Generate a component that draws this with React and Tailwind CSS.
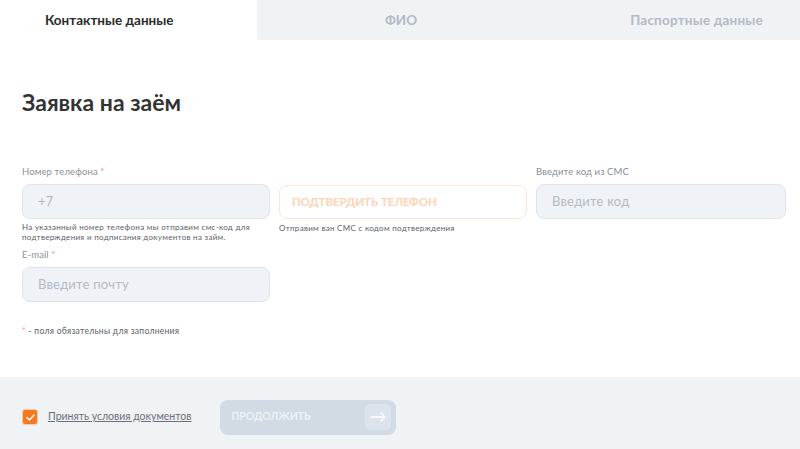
import React from 'react';

const font = { fontFamily: 'Lato, "Noto Sans", sans-serif' };

function Field({ label, required, placeholder, hint }) {
  return (
    <div className="flex flex-col">
      <div className="h-[24px] text-[9.5px] leading-[14px] text-[#8a8f96] pt-[5px] tracking-[0.1px]">
        {label}
        {required && <span className="text-[#f28b8b]"> *</span>}
      </div>
      <div className="h-[35px] rounded-[8px] border border-[#dde4ec] bg-[#eff3f7] flex items-center px-[15px] text-[13px] text-[#b3bac4] tracking-[0.2px]">
        {placeholder}
      </div>
      {hint && <p className="mt-[3px] text-[8px] leading-[10px] text-[#5b6068] tracking-[0.3px]">{hint}</p>}
    </div>
  );
}

export default function App() {
  return (
    <div className="w-[800px] h-[449px] bg-white flex flex-col overflow-hidden" style={font}>
      <div className="flex h-[40px] bg-[#eff3f6] text-[13.5px] font-bold">
        <div className="w-[257px] bg-white flex items-center pl-[45px] text-[#2b2b2b]">Контактные данные</div>
        <div className="w-[283px] flex items-center pl-[128px] text-[#b3bac4]">ФИО</div>
        <div className="flex-1 flex items-center justify-end pr-[37px] text-[#b3bac4] tracking-[0.2px]">Паспортные данные</div>
      </div>

      <div className="flex-1 px-[22px] pt-[47px]">
        <h1 className="text-[23px] leading-[30px] font-bold text-[#333]">Заявка на заём</h1>

        <div className="mt-[43px] grid grid-cols-[248px_248px_250px] gap-x-[9px]">
          <Field
            label="Номер телефона"
            required
            placeholder="+7"
            hint={<>На указанный номер телефона мы отправим смс-код для<br />подтверждения и подписания документов на займ.</>}
          />
          <div className="flex flex-col pt-[25px]">
            <div className="h-[34px] rounded-[8px] border border-[#fde6d5] flex items-center px-[12px] text-[11.5px] font-bold text-[#fdd3b3]">
              ПОДТВЕРДИТЬ ТЕЛЕФОН
            </div>
            <p className="mt-[4px] text-[8px] leading-[10px] text-[#5b6068] tracking-[0.3px]">Отправим ван СМС с кодом подтверждения</p>
          </div>
          <Field label="Введите код из СМС" placeholder="Введите код" />
        </div>

        <div className="mt-[1px] w-[248px]">
          <Field label="E-mail" required placeholder="Введите почту" />
        </div>

        <p className="mt-[23px] text-[8.5px] text-[#5b6068] tracking-[0.3px]">
          <span className="text-[#f28b8b]">*</span> - поля обязательны для заполнения
        </p>
      </div>

      <div className="h-[72px] bg-[#eff3f6] flex items-center px-[22px] pt-[8px]">
        <div className="w-[16px] h-[16px] rounded-[3px] bg-[#f47a20] border border-[#f9c9a4] flex items-center justify-center">
          <svg width="9" height="7" viewBox="0 0 9 7" fill="none">
            <path d="M1 3.5L3.5 6L8 1" stroke="white" strokeWidth="1.5" strokeLinecap="round" strokeLinejoin="round" />
          </svg>
        </div>
        <a className="ml-[10px] text-[10.5px] text-[#6b7078] underline">Принять условия документов</a>
        <div className="ml-[28px] w-[176px] h-[35px] rounded-[8px] bg-[#d2dae4] flex items-center justify-between pl-[12px] pr-[5px]">
          <span className="text-[10.5px] font-bold text-[#eef1f5]">ПРОДОЛЖИТЬ</span>
          <div className="w-[26px] h-[26px] rounded-[5px] bg-[#dde3ea] flex items-center justify-center">
            <svg width="16" height="10" viewBox="0 0 16 10" fill="none">
              <path d="M1 5H15M11 1L15 5L11 9" stroke="white" strokeWidth="1.3" strokeLinecap="round" strokeLinejoin="round" />
            </svg>
          </div>
        </div>
      </div>
    </div>
  );
}
